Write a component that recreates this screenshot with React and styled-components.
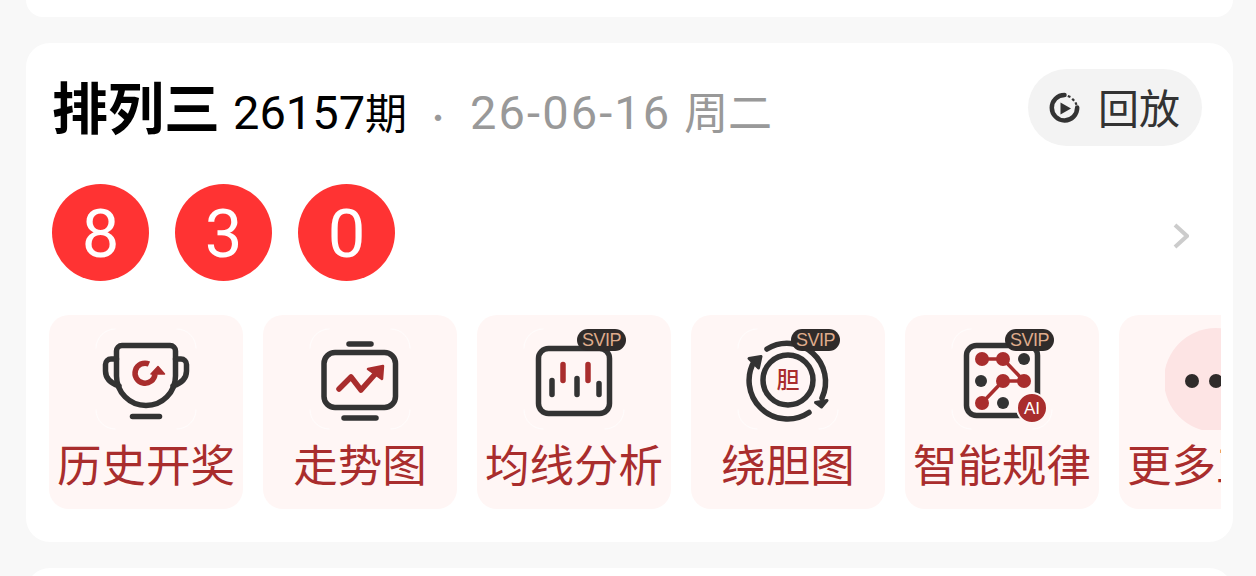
import styled, { createGlobalStyle } from "styled-components"

const RED = "#a92d2d"
const DARK = "#333333"

const GlobalStyle = createGlobalStyle`
  html, body {
    margin: 0;
    padding: 0;
    background: #f8f8f8;
  }
`

const Page = styled.div`
  width: 1256px;
  height: 576px;
  overflow: hidden;
  box-sizing: border-box;
  padding: 0 23px 0 26px;
  display: flex;
  flex-direction: column;
  gap: 26px;
  background: #f8f8f8;
  font-family: "Noto Sans CJK SC", "Noto Sans", sans-serif;
`

const TopStub = styled.div`
  flex: 0 0 17px;
  background: #fff;
  border-radius: 0 0 24px 24px;
`

const BottomStub = styled.div`
  flex: 0 0 24px;
  background: #fff;
  border-radius: 24px 24px 0 0;
`

const Card = styled.section`
  flex: 0 0 auto;
  box-sizing: border-box;
  height: 499px;
  background: #fff;
  border-radius: 24px;
  padding: 26px 12px 33px 23px;
`

const Header = styled.div`
  display: flex;
  align-items: center;
  justify-content: space-between;
  height: 77px;
  padding: 0 19px 0 3px;
`

const TitleGroup = styled.div`
  display: flex;
  align-items: baseline;
  white-space: nowrap;
  padding-bottom: 4px;
`

const Title = styled.h2`
  margin: 0;
  font-size: 56px;
  line-height: 71px;
  font-weight: 700;
  color: #000;
`

const Issue = styled.span`
  margin-left: 13px;
  font-family: "Roboto", "Noto Sans CJK SC", sans-serif;
  font-size: 47px;
  color: #000;
`

const Unit = styled.span`
  font-family: "Noto Sans CJK SC", sans-serif;
  font-size: 42px;
`

const Dot = styled.span`
  margin: 0 17px 0 16px;
  font-size: 30px;
  color: #999;
`

const DateText = styled.span`
  font-family: "Roboto", "Noto Sans CJK SC", sans-serif;
  font-size: 47px;
  letter-spacing: 2.1px;
  color: #999;
`

const Weekday = styled.span`
  margin-left: -1px;
  font-family: "Noto Sans CJK SC", sans-serif;
  font-size: 44px;
  letter-spacing: 0;
`

const ReplayButton = styled.button`
  display: flex;
  align-items: center;
  gap: 17px;
  height: 77px;
  width: 174px;
  box-sizing: border-box;
  padding: 0 0 0 21px;
  border: 0;
  border-radius: 39px;
  background: #f3f3f3;
  color: ${DARK};
  font-family: inherit;
  font-size: 41px;
  white-space: nowrap;
`

const ReplayText = styled.span`
  margin-top: -4px;
`

const ResultRow = styled.div`
  display: flex;
  align-items: center;
  justify-content: space-between;
  margin-top: 38px;
  padding: 0 32px 0 3px;
`

const Balls = styled.div`
  display: flex;
  gap: 26px;
`

const Ball = styled.div`
  width: 97px;
  height: 97px;
  box-sizing: border-box;
  padding-top: 3px;
  border-radius: 50%;
  background: #ff3333;
  color: #fff;
  display: grid;
  place-items: center;
  font-family: "Roboto", sans-serif;
  font-size: 67px;
  font-weight: 450;
  line-height: 1;
`

const Tools = styled.div`
  display: flex;
  gap: 20px;
  margin-top: 34px;
  overflow: hidden;
`

const Tile = styled.div`
  flex: 0 0 194px;
  height: 194px;
  box-sizing: border-box;
  padding-top: 13px;
  border-radius: 20px;
  background: #fff6f5;
  display: flex;
  flex-direction: column;
  align-items: center;
`

const IconBox = styled.div`
  position: relative;
  width: 102px;
  height: 102px;
`

const Badge = styled.span`
  position: absolute;
  left: 54px;
  top: 1px;
  width: 49px;
  height: 22px;
  border-radius: 11px;
  background: #2f2b2a;
  color: #dfab8c;
  font-family: "Liberation Sans", sans-serif;
  font-size: 18px;
  letter-spacing: -0.5px;
  line-height: 22px;
  text-align: center;
`

const Label = styled.div`
  margin-top: 10px;
  font-size: 44.5px;
  line-height: 46px;
  color: ${RED};
  white-space: nowrap;
`

const Svg = styled.svg`
  display: block;
  fill: none;
  stroke-linecap: round;
  stroke-linejoin: round;
`

const ChevronSvg = styled(Svg)`
  margin-top: 6px;
`

const Corners = () => (
  <path
    d="M1 20A19 19 0 0 1 20 1M82 1A19 19 0 0 1 101 20M101 82A19 19 0 0 1 82 101M20 101A19 19 0 0 1 1 82"
    stroke="#fff"
    strokeWidth="1"
    opacity="0.7"
  />
)

const ReplayIcon = () => (
  <Svg width="32" height="32" viewBox="0 0 32 32" stroke={DARK} strokeWidth="4.500">
    <path d="M15.500 3A12.700 12.700 0 1 0 28.200 15.500" />
    <path d="M20.500 3.500L19.700 5.600M25 7L23.400 8.600M28 11.200L26 12" strokeWidth="2.800" strokeLinecap="butt" />
    <path d="M11.500 10.500L22 16.500L11.500 22.500Z" fill={DARK} stroke="none" />
  </Svg>
)

const Chevron = () => (
  <ChevronSvg width="16" height="26" viewBox="0 0 16 26" stroke="#cccccc" strokeWidth="4">
    <path d="M2 2L14 13L2 24" strokeLinecap="butt" strokeLinejoin="miter" />
  </ChevronSvg>
)

const TrophyIcon = () => (
  <Svg width="102" height="102" viewBox="0 0 102 102" stroke={DARK} strokeWidth="5.500">
    <Corners />
    <path d="M27 17.500H75A5.500 5.500 0 0 1 80.500 23V48A29.500 29.500 0 0 1 21.500 48V23A5.500 5.500 0 0 1 27 17.500Z" />
    <path d="M21.500 31H16A5.500 5.500 0 0 0 10.500 36.500V43C10.500 50 15 55 24 58" />
    <path d="M80.500 31H86A5.500 5.500 0 0 1 91.500 36.500V43C91.500 50 87 55 78 58" />
    <path d="M37.500 88.500H64.500" />
    <path d="M54 36A10 10 0 1 0 60 46" stroke={RED} strokeLinecap="butt" />
    <path d="M63 38.500L69.500 46H56Z" fill={RED} stroke={RED} strokeWidth="1.500" />
  </Svg>
)

const TrendIcon = () => (
  <Svg width="102" height="102" viewBox="0 0 102 102" stroke={DARK} strokeWidth="5.500">
    <Corners />
    <rect x="15" y="24.500" width="71.500" height="55" rx="11" />
    <path d="M40 16H62" />
    <path d="M35 90H67" />
    <path d="M30 61L42 49L52 62L68 44" stroke={RED} />
    <path d="M59 41L74 38L73 51Z" fill={RED} stroke={RED} strokeWidth="2.500" />
  </Svg>
)

const BarsIcon = () => (
  <Svg width="102" height="102" viewBox="0 0 102 102" stroke={DARK} strokeWidth="5.500">
    <Corners />
    <rect x="15.500" y="20.500" width="71" height="65" rx="10" />
    <path d="M29 52.500V66.500M54 50.500V66.500M76 55.500V66.500" />
    <path d="M40 36.500V52.500M65 36.500V52.500" stroke={RED} />
  </Svg>
)

const CycleIcon = () => (
  <Svg width="102" height="102" viewBox="0 0 102 102" stroke={DARK} strokeWidth="5.500">
    <Corners />
    <circle cx="51" cy="52" r="25" />
    <path d="M30 21A38.500 38.500 0 0 1 85 70" />
    <path d="M72 84.500A38.500 38.500 0 0 1 18 32" />
    <path d="M12 30.500L24 28.500L21.500 40Z" fill={DARK} strokeWidth="3" />
    <path d="M78.500 74.500L84.500 79L90 72.500Z" fill={DARK} strokeWidth="3" />
    <text x="51" y="60" textAnchor="middle" fontSize="23" fontWeight="500" fill={RED} stroke="none" fontFamily="Noto Sans CJK SC, sans-serif">胆</text>
  </Svg>
)

const GridIcon = () => (
  <Svg width="102" height="102" viewBox="0 0 102 102" stroke={DARK} strokeWidth="5.500">
    <Corners />
    <rect x="15.500" y="17.500" width="71" height="70" rx="10" />
    <path d="M31 31H52L73 53H52L31 75" stroke={RED} strokeWidth="3.500" />
    <g fill={RED} stroke="none">
      <circle cx="31" cy="31" r="7" />
      <circle cx="52" cy="31" r="7" />
      <circle cx="52" cy="53" r="7" />
      <circle cx="73" cy="53" r="7" />
      <circle cx="31" cy="75" r="7" />
    </g>
    <g fill={DARK} stroke="none">
      <circle cx="73" cy="31" r="6" />
      <circle cx="30" cy="53" r="6" />
      <circle cx="52" cy="75" r="6" />
    </g>
    <circle cx="81" cy="80" r="15" fill={RED} stroke="#fff6f5" strokeWidth="2" />
    <text x="81" y="86" textAnchor="middle" fontSize="17" fontWeight="500" fill="#fff" stroke="none" fontFamily="Liberation Sans, sans-serif">AI</text>
  </Svg>
)

const MoreIcon = () => (
  <Svg width="102" height="102" viewBox="0 0 102 102">
    <circle cx="51" cy="52" r="52" fill="#fde4e4" />
    <g fill="#2f2b2a">
      <circle cx="27" cy="53" r="7" />
      <circle cx="51" cy="53" r="7" />
      <circle cx="75" cy="53" r="7" />
    </g>
  </Svg>
)

const tools = [
  { label: "历史开奖", Icon: TrophyIcon },
  { label: "走势图", Icon: TrendIcon },
  { label: "均线分析", Icon: BarsIcon, svip: true },
  { label: "绕胆图", Icon: CycleIcon, svip: true },
  { label: "智能规律", Icon: GridIcon, svip: true },
  { label: "更多工具", Icon: MoreIcon },
]

const App = () => {
  return (
    <>
      <GlobalStyle />
      <Page>
        <TopStub />
        <Card>
          <Header>
            <TitleGroup>
              <Title>排列三</Title>
              <Issue>26157<Unit>期</Unit></Issue>
              <Dot>·</Dot>
              <DateText>26-06-16 <Weekday>周二</Weekday></DateText>
            </TitleGroup>
            <ReplayButton>
              <ReplayIcon />
              <ReplayText>回放</ReplayText>
            </ReplayButton>
          </Header>
          <ResultRow>
            <Balls>
              {[8, 3, 0].map((n) => (
                <Ball key={n}>{n}</Ball>
              ))}
            </Balls>
            <Chevron />
          </ResultRow>
          <Tools>
            {tools.map(({ label, Icon, svip }) => (
              <Tile key={label}>
                <IconBox>
                  <Icon />
                  {svip && <Badge>SVIP</Badge>}
                </IconBox>
                <Label>{label}</Label>
              </Tile>
            ))}
          </Tools>
        </Card>
        <BottomStub />
      </Page>
    </>
  )
}

export default App
